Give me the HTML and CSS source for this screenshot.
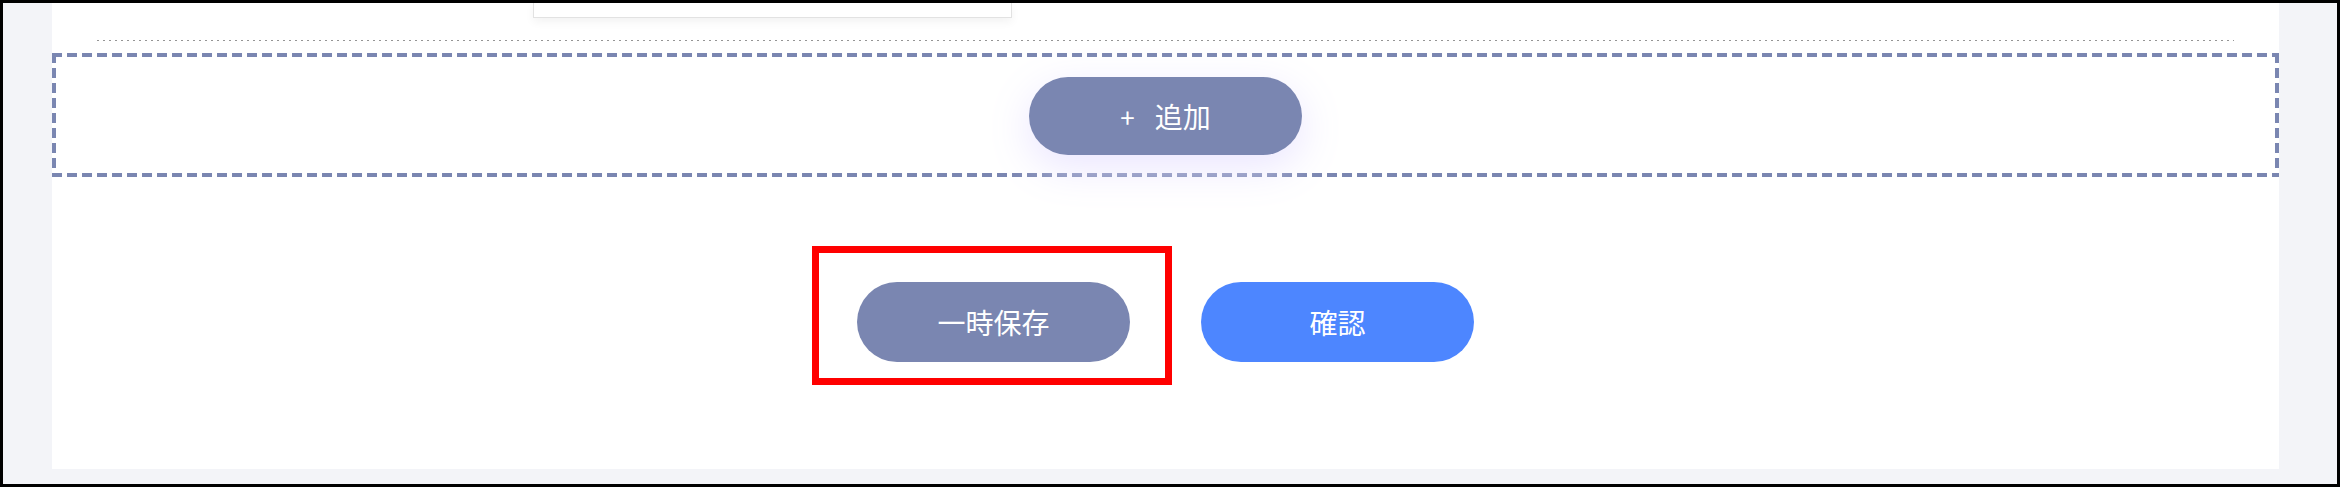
FILE: index.html
```html
<!DOCTYPE html>
<html lang="ja">
<head>
    <meta charset="UTF-8">
    <meta name="viewport" content="width=device-width, initial-scale=1.0">
    <title>登録</title>
    <link rel="stylesheet" href="styles.css">
</head>
<body>
    <div class="frame">
        <div class="panel">
            <div class="card-stub"></div>
            <div class="divider"></div>
            <div class="add-area">
                <button class="btn btn-add" type="button">
                    <span class="plus">+</span>
                    <span>追加</span>
                </button>
            </div>
            <div class="actions">
                <div class="mark-wrap">
                    <button class="btn btn-save" type="button">一時保存</button>
                    <span class="mark"></span>
                </div>
                <button class="btn btn-confirm" type="button">確認</button>
            </div>
        </div>
    </div>
</body>
</html>
```

FILE: styles.css
```css
html, body {
    margin: 0;
    padding: 0;
}
body {
    font-family: "Noto Sans CJK JP", "Noto Sans", sans-serif;
    background: #fff;
}
.frame {
    box-sizing: border-box;
    width: 2340px;
    height: 487px;
    border: 3px solid #000;
    background: #f3f4f8;
    padding: 0 58px 14px 49px;
}
.panel {
    background: #fff;
    height: 466px;
    overflow: hidden;
}
.card-stub {
    box-sizing: border-box;
    margin-left: 481px;
    width: 479px;
    height: 15px;
    border: 1px solid #e2e2e2;
    border-top: none;
    background: #fff;
    box-shadow: 0 4px 10px rgba(0, 0, 0, 0.05);
}
.divider {
    margin: 22px 45px 0 45px;
    height: 1px;
    background: repeating-linear-gradient(to right, #959595 0 2px, transparent 2px 6px);
}
/* dashed frame drawn with gradients so dash length matches */
.add-area {
    margin-top: 12px;
    height: 124px;
    box-sizing: border-box;
    background:
        repeating-linear-gradient(to right, #7a86b1 0 10px, transparent 10px 15px) left top / 100% 4px no-repeat,
        repeating-linear-gradient(to right, #7a86b1 0 10px, transparent 10px 15px) left bottom / 100% 4px no-repeat,
        repeating-linear-gradient(to bottom, #7a86b1 0 10px, transparent 10px 15px) left top / 4px 100% no-repeat,
        repeating-linear-gradient(to bottom, #7a86b1 0 10px, transparent 10px 15px) right top / 4px 100% no-repeat;
    display: flex;
    justify-content: center;
    align-items: center;
    padding-top: 2px;
}
.btn {
    font-family: inherit;
    border: none;
    border-radius: 40px;
    color: #fff;
    font-size: 28px;
    width: 273px;
    display: flex;
    align-items: center;
    justify-content: center;
    cursor: pointer;
    padding: 0;
}
.btn-add {
    height: 78px;
    background: #7a86b1;
    gap: 20px;
    box-shadow: 0 12px 40px rgba(232, 226, 255, 0.9);
}
.plus {
    font-size: 26px;
}
.actions {
    margin-top: 105px;
    display: flex;
    justify-content: center;
    gap: 71px;
}
.mark-wrap {
    position: relative;
}
.btn-save {
    height: 80px;
    background: #7a86b1;
}
.btn-confirm {
    height: 80px;
    background: #4d86ff;
}
.mark {
    position: absolute;
    top: -36px;
    right: -42px;
    bottom: -23px;
    left: -45px;
    border: 7px solid #ff0000;
}
```
